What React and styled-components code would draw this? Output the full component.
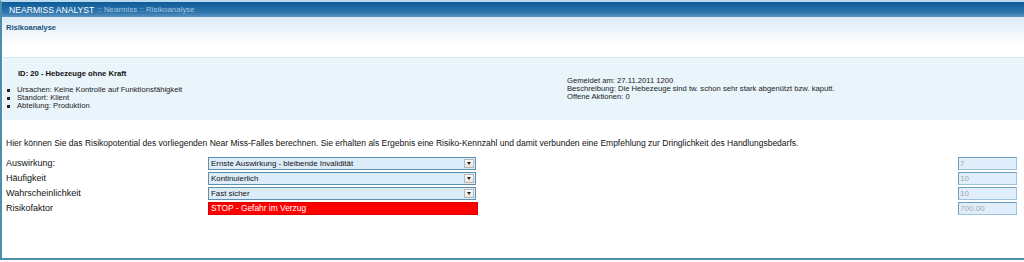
import styled, { createGlobalStyle } from "styled-components";

const GlobalStyle = createGlobalStyle`
    html, body { margin:0; padding:0; background:#fff; }
    body { font-family:"Liberation Sans", Arial, sans-serif; }
`;

const Frame = styled.div`
    width:1024px;
    height:260px;
    box-sizing:border-box;
    border-top:2px solid #b9d9ee;
    border-left:2px solid #4d8eab;
    border-bottom:2px solid #4d8eab;
    overflow:hidden;
`;

const HeaderBar = styled.div`
    height:15px;
    display:flex;
    align-items:center;
    gap:3px;
    padding-left:7px;
    background:linear-gradient(#0d5c98, #2f76ad 70%, #5b95c3);
    color:#fff;
`;

const AppName = styled.span`
    font-size:8.6px;
`;

const Crumbs = styled.span`
    font-size:7.9px;
    color:#a3c5e0;
`;

const SubHeader = styled.div`
    height:40px;
    padding:6px 0 0 4px;
    box-sizing:border-box;
    background:linear-gradient(#dbebf7, #ffffff 70%);
`;

const PageTitle = styled.div`
    font-size:7.5px;
    font-weight:bold;
    color:#204f78;
`;

const InfoBox = styled.div`
    height:62px;
    margin-left:1px;
    background:#e9f4fb;
    border-top:1px dotted #c4def0;
    display:grid;
    grid-template-columns:564px 1fr;
    font-size:7.65px;
    color:#222;
`;

const InfoLeft = styled.div`
    padding:11px 0 0 4px;
`;

const InfoRight = styled.div`
    padding:19px 0 0 0;
    line-height:8px;
`;

const CaseTitle = styled.div`
    font-weight:bold;
    color:#111;
    padding-left:11px;
    margin-bottom:8px;
`;

const Bullets = styled.ul`
    margin:0;
    padding:0;
    list-style:none;
    line-height:8px;
`;

const Bullet = styled.li`
    display:flex;
    align-items:center;
    gap:7px;
    &::before {
        content:"";
        width:3px;
        height:3px;
        background:#222;
    }
`;

const Intro = styled.p`
    margin:18px 0 0 4px;
    font-size:8.5px;
    color:#111;
`;

const Form = styled.div`
    margin:9px 7px 0 4px;
    display:grid;
    grid-template-columns:202px 270px 1fr 59px;
    row-gap:2px;
    font-size:9px;
    color:#111;
`;

const Label = styled.div`
    height:13px;
    line-height:13px;
`;

const Select = styled.div`
    height:13px;
    box-sizing:border-box;
    border:1px solid #5f8faf;
    background:#dcecf8;
    display:flex;
    align-items:center;
    justify-content:space-between;
    padding:0 1px 0 2px;
    font-size:7.9px;
    margin-right:2px;
`;

const Arrow = styled.span`
    width:10px;
    height:9px;
    box-sizing:border-box;
    border:1px solid #b8b8b8;
    background:linear-gradient(#fdfdfd, #e4e4e4);
    display:flex;
    align-items:center;
    justify-content:center;
    &::after {
        content:"";
        border-left:2.5px solid transparent;
        border-right:2.5px solid transparent;
        border-top:3px solid #222;
    }
`;

const Result = styled.div`
    height:13px;
    box-sizing:border-box;
    background:#ff0000;
    border:1px solid #d00;
    color:#fff;
    font-size:8.4px;
    padding-left:2px;
    line-height:11px;
`;

const Score = styled.div`
    height:13px;
    box-sizing:border-box;
    border:1px solid #6c9dbd;
    border-right-color:#9ec4dc;
    border-bottom-color:#9ec4dc;
    background:#dfeefa;
    color:#a9a9a9;
    font-size:8.1px;
    line-height:11px;
    padding-left:1px;
`;

const rows = [
    { label:"Auswirkung:", value:"Ernste Auswirkung - bleibende Invalidität", score:"7" },
    { label:"Häufigkeit", value:"Kontinuierlich", score:"10" },
    { label:"Wahrscheinlichkeit", value:"Fast sicher", score:"10" },
];

function App() {
    return (
        <>
            <GlobalStyle />
            <Frame>
                <HeaderBar>
                    <AppName>NEARMISS ANALYST</AppName>
                    <Crumbs>:: Nearmiss :: Risikoanalyse</Crumbs>
                </HeaderBar>
                <SubHeader>
                    <PageTitle>Risikoanalyse</PageTitle>
                </SubHeader>
                <InfoBox>
                    <InfoLeft>
                        <CaseTitle>ID: 20 - Hebezeuge ohne Kraft</CaseTitle>
                        <Bullets>
                            <Bullet>Ursachen: Keine Kontrolle auf Funktionsfähigkeit</Bullet>
                            <Bullet>Standort: Klient</Bullet>
                            <Bullet>Abteilung: Produktion</Bullet>
                        </Bullets>
                    </InfoLeft>
                    <InfoRight>
                        <div>Gemeldet am: 27.11.2011 1200</div>
                        <div>Beschreibung: Die Hebezeuge sind tw. schon sehr stark abgenützt bzw. kaputt.</div>
                        <div>Offene Aktionen: 0</div>
                    </InfoRight>
                </InfoBox>
                <Intro>
                    Hier können Sie das Risikopotential des vorliegenden Near Miss-Falles berechnen. Sie erhalten als Ergebnis eine Risiko-Kennzahl und damit verbunden eine Empfehlung zur Dringlichkeit des Handlungsbedarfs.
                </Intro>
                <Form>
                    {rows.map(r=>[
                        <Label key={r.label+"l"}>{r.label}</Label>,
                        <Select key={r.label+"s"}>{r.value}<Arrow /></Select>,
                        <div key={r.label+"g"} />,
                        <Score key={r.label+"n"}>{r.score}</Score>,
                    ])}
                    <Label>Risikofaktor</Label>
                    <Result>STOP - Gefahr im Verzug</Result>
                    <div />
                    <Score>700.00</Score>
                </Form>
            </Frame>
        </>
    );
}

export default App;
